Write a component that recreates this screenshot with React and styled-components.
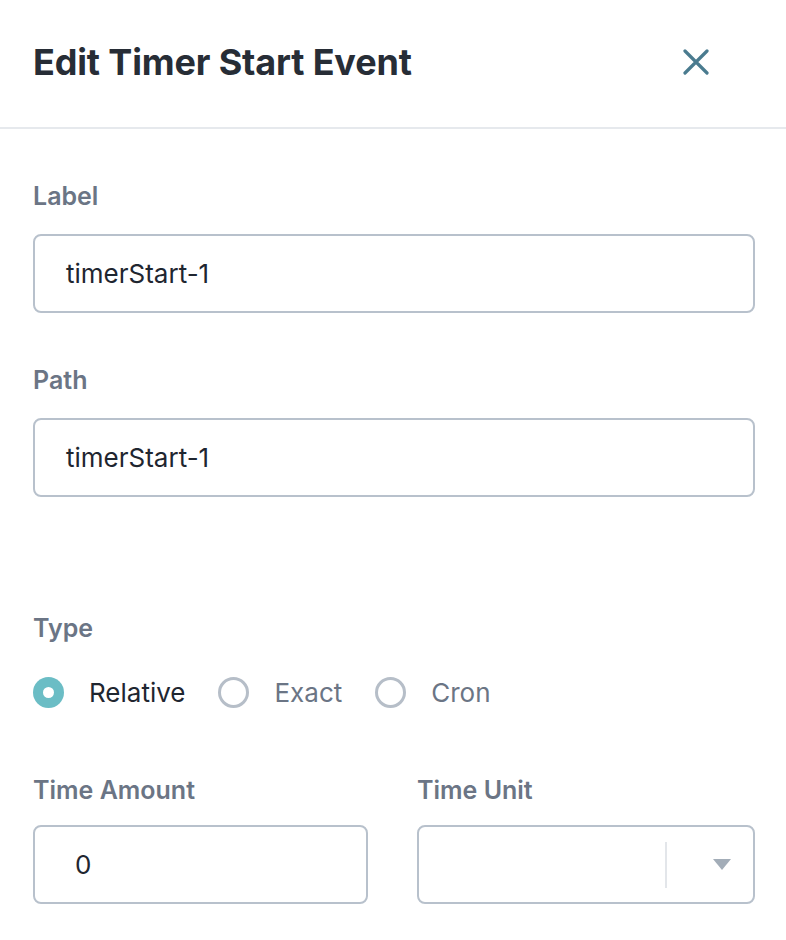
import React from "react";
import styled, { createGlobalStyle } from "styled-components";

const Global = createGlobalStyle`
  html, body { margin: 0; padding: 0; background: #ffffff; }
  body { font-family: Inter, "Noto Sans", sans-serif; -webkit-font-smoothing: antialiased; }
  * { box-sizing: border-box; }
`;

const Panel = styled.div`
  width: 786px;
  height: 940px;
  background: #fff;
  overflow: hidden;
`;

const Header = styled.div`
  height: 129px;
  display: flex;
  align-items: center;
  justify-content: space-between;
  padding: 0 76px 4px 33px;
  border-bottom: 2px solid #e6e9ed;
`;

const Title = styled.h1`
  margin: 0;
  font-size: 36px;
  font-weight: 700;
  color: #272d36;
  letter-spacing: -0.15px;
`;

const CloseButton = styled.button`
  border: 0;
  background: none;
  padding: 0;
  width: 28px;
  height: 28px;
  display: flex;
  align-items: center;
  justify-content: center;
  cursor: pointer;
`;

const Body = styled.div`
  padding: 53px 31px 0 33px;
  display: flex;
  flex-direction: column;
`;

const Field = styled.div`
  display: flex;
  flex-direction: column;
  margin-bottom: ${(p) => p.$mb || 0}px;
`;

const Label = styled.label`
  font-size: 25px;
  font-weight: 600;
  line-height: 28px;
  color: #6b7585;
  margin-bottom: ${(p) => p.$mb || 24}px;
`;

const Input = styled.div`
  height: 79px;
  border: 2px solid #b8c1cc;
  border-radius: 8px;
  display: flex;
  align-items: center;
  padding-left: ${(p) => p.$pl || 31}px;
  font-size: 26px;
  color: #1f2630;
`;

const RadioRow = styled.div`
  display: flex;
  align-items: center;
  height: 32px;
`;

const RadioOption = styled.div`
  display: flex;
  align-items: center;
  margin-right: ${(p) => p.$mr}px;
`;

const RadioCircle = styled.span`
  width: 31px;
  height: 31px;
  border-radius: 50%;
  border: ${(p) => (p.$checked ? "none" : "3px solid #b6bec8")};
  background: ${(p) => (p.$checked ? "#6bbdc5" : "#fff")};
  display: flex;
  align-items: center;
  justify-content: center;
  margin-right: 25px;
  &::after {
    content: "";
    display: ${(p) => (p.$checked ? "block" : "none")};
    width: 11px;
    height: 11px;
    border-radius: 50%;
    background: #fff;
  }
`;

const RadioText = styled.span`
  font-size: 26px;
  color: ${(p) => (p.$checked ? "#1f2630" : "#6b7585")};
`;

const Row = styled.div`
  display: grid;
  grid-template-columns: 335px 338px;
  column-gap: 49px;
`;

const Select = styled.div`
  height: 79px;
  border: 2px solid #b8c1cc;
  border-radius: 8px;
  display: flex;
  align-items: center;
  justify-content: flex-end;
`;

const Separator = styled.span`
  width: 2px;
  height: 46px;
  background: #e3e6ea;
`;

const Caret = styled.span`
  width: 86px;
  padding-right: 22px;
  display: flex;
  justify-content: flex-end;
  align-items: center;
`;

export default function App() {
  return (
    <Panel>
      <Global />
      <Header>
        <Title>Edit Timer Start Event</Title>
        <CloseButton aria-label="Close">
          <svg width="26" height="26" viewBox="0 0 26 26">
            <path d="M2 2 L24 24 M24 2 L2 24" stroke="#4a7b8f" strokeWidth="3.2" strokeLinecap="round" />
          </svg>
        </CloseButton>
      </Header>
      <Body>
        <Field $mb={53}>
          <Label>Label</Label>
          <Input>timerStart-1</Input>
        </Field>
        <Field $mb={117}>
          <Label>Path</Label>
          <Input>timerStart-1</Input>
        </Field>
        <Field $mb={68}>
          <Label $mb={34}>Type</Label>
          <RadioRow>
            <RadioOption $mr={33}>
              <RadioCircle $checked />
              <RadioText $checked>Relative</RadioText>
            </RadioOption>
            <RadioOption $mr={33}>
              <RadioCircle />
              <RadioText>Exact</RadioText>
            </RadioOption>
            <RadioOption $mr={0}>
              <RadioCircle />
              <RadioText>Cron</RadioText>
            </RadioOption>
          </RadioRow>
        </Field>
        <Row>
          <Field>
            <Label $mb={21}>Time Amount</Label>
            <Input $pl={40}>0</Input>
          </Field>
          <Field>
            <Label $mb={21}>Time Unit</Label>
            <Select>
              <Separator />
              <Caret>
                <svg width="18" height="11" viewBox="0 0 18 11">
                  <path d="M0 0 H18 L9 11 Z" fill="#a3adb8" />
                </svg>
              </Caret>
            </Select>
          </Field>
        </Row>
      </Body>
    </Panel>
  );
}
